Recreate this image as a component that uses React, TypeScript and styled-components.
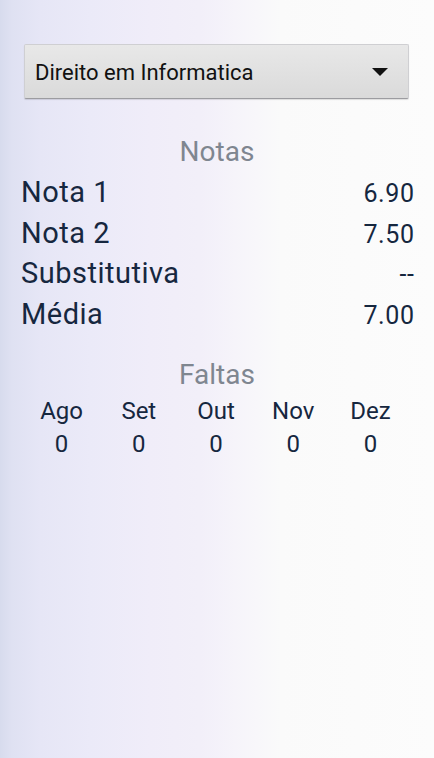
import React from "react";
import styled, { createGlobalStyle } from "styled-components";

const GlobalStyle = createGlobalStyle`
  html, body {
    margin: 0;
    padding: 0;
  }
  body {
    font-family: Roboto, "Noto Sans", "Liberation Sans", sans-serif;
  }
`;

const Screen = styled.div`
  min-height: 758px;
  box-sizing: border-box;
  padding-top: 44px;
  background: linear-gradient(
    to right,
    #d7dbed 0px,
    #dfe1f2 12px,
    #e6e6f6 40px,
    #ebeaf8 90px,
    #f0edf9 150px,
    #f2eff9 200px,
    #f6f4fa 235px,
    #fafafa 280px,
    #fcfcfc 434px
  );
  color: #16273f;
`;

const Spinner = styled.div`
  margin: 0 25px 0 24px;
  height: 55px;
  box-sizing: border-box;
  display: flex;
  align-items: center;
  justify-content: space-between;
  padding: 2px 20px 0 10px;
  border: 1px solid #cfcfd2;
  border-bottom-color: #9c9ca0;
  border-radius: 2px;
  background: linear-gradient(#e8e8e8, #dadada);
  box-shadow: 0 1px 1px rgba(0, 0, 0, 0.12);
`;

const SpinnerLabel = styled.span`
  font-size: 22px;
  color: #111;
`;

const Caret = styled.span`
  width: 0;
  height: 0;
  border-left: 8px solid transparent;
  border-right: 8px solid transparent;
  border-top: 8px solid #111;
  margin-bottom: 2px;
`;

const SectionTitle = styled.div<{ $top: number }>`
  margin-top: ${(p) => p.$top}px;
  text-align: center;
  font-size: 28px;
  line-height: 34px;
  color: #7f8690;
`;

const GradeList = styled.div`
  margin-top: 3px;
  padding: 0 20px 0 21px;
`;

const GradeRow = styled.div`
  display: flex;
  justify-content: space-between;
  align-items: baseline;
  height: 40.5px;
  line-height: 40.5px;
`;

const GradeName = styled.span`
  font-size: 29px;
  letter-spacing: 0.5px;
`;

const GradeValue = styled.span`
  font-size: 25px;
  letter-spacing: 0.6px;
  margin-right: -0.6px;
`;

const AbsenceGrid = styled.div`
  margin: 3px 25px 0 23px;
  display: grid;
  grid-template-columns: repeat(5, 1fr);
  text-align: center;
  font-size: 24px;
  line-height: 33px;
`;

const grades = [
  { name: "Nota 1", value: "6.90" },
  { name: "Nota 2", value: "7.50" },
  { name: "Substitutiva", value: "--" },
  { name: "Média", value: "7.00" },
];

const months = ["Ago", "Set", "Out", "Nov", "Dez"];
const absences = [0, 0, 0, 0, 0];

export default function App() {
  return (
    <>
      <GlobalStyle />
      <Screen>
        <Spinner>
          <SpinnerLabel>Direito em Informatica</SpinnerLabel>
          <Caret />
        </Spinner>

        <SectionTitle $top={36}>Notas</SectionTitle>
        <GradeList>
          {grades.map((g) => (
            <GradeRow key={g.name}>
              <GradeName>{g.name}</GradeName>
              <GradeValue>{g.value}</GradeValue>
            </GradeRow>
          ))}
        </GradeList>

        <SectionTitle $top={24}>Faltas</SectionTitle>
        <AbsenceGrid>
          {months.map((m) => (
            <span key={m}>{m}</span>
          ))}
          {absences.map((a, i) => (
            <span key={months[i] + "-n"}>{a}</span>
          ))}
        </AbsenceGrid>
      </Screen>
    </>
  );
}
